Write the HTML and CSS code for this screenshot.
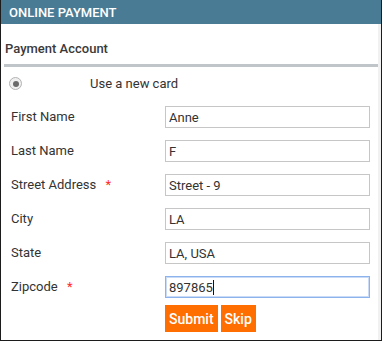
FILE: index.html
```html
<!DOCTYPE html>
<html lang="en">
<head>
    <meta charset="UTF-8">
    <title>Online Payment</title>
    <link rel="stylesheet" href="styles.css">
</head>
<body>
    <div class="panel">
        <div class="panel-header">ONLINE PAYMENT</div>
        <div class="panel-body">
            <div class="account-title">Payment Account</div>

            <div class="card-choice">
                <span class="radio"><span class="radio-dot"></span></span>
                <span class="card-label">Use a new card</span>
            </div>

            <div class="form">
                <div class="form-row">
                    <label>First Name</label>
                    <input class="field" type="text" value="Anne">
                </div>
                <div class="form-row">
                    <label>Last Name</label>
                    <input class="field" type="text" value="F">
                </div>
                <div class="form-row">
                    <label>Street Address <span class="required">*</span></label>
                    <input class="field" type="text" value="Street - 9">
                </div>
                <div class="form-row">
                    <label>City</label>
                    <input class="field" type="text" value="LA">
                </div>
                <div class="form-row">
                    <label>State</label>
                    <input class="field" type="text" value="LA, USA">
                </div>
                <div class="form-row">
                    <label>Zipcode <span class="required">*</span></label>
                    <div class="field-wrap">
                        <input class="field field-focus" type="text" value="897865">
                        <span class="caret"></span>
                    </div>
                </div>
                <div class="actions">
                    <button class="btn">Submit</button>
                    <button class="btn">Skip</button>
                </div>
            </div>
        </div>
    </div>
</body>
</html>
```

FILE: styles.css
```css
body {
    margin: 0;
    padding: 0;
    background: #ffffff;
    font-family: Roboto, "Liberation Sans", sans-serif;
    color: #333333;
}
.panel {
    width: 380px;
    height: 340px;
    border: 1px solid #1c1c1c;
    border-top: none;
    background: #ffffff;
}
.panel-header {
    height: 24px;
    line-height: 25px;
    padding-left: 8px;
    background: #4a7b95;
    color: #ffffff;
    font-size: 13px;
    font-weight: 500;
}
.panel-body {
    height: 316px;
    border-right: 3px solid #f1f1f1;
}
.account-title {
    margin-left: 3px;
    padding-left: 1px;
    padding-top: 10px;
    height: 30px;
    line-height: 30px;
    font-size: 13px;
    font-weight: 500;
    color: #3a3a3a;
    border-bottom: 3px solid #c0c5c9;
}
.card-choice {
    display: flex;
    align-items: center;
    height: 33px;
    padding-left: 8px;
}
.radio {
    display: flex;
    align-items: center;
    justify-content: center;
    width: 11px;
    height: 11px;
    border: 1px solid #b3b3b3;
    border-radius: 50%;
    background: #efefef;
}
.radio-dot {
    width: 6px;
    height: 6px;
    border-radius: 50%;
    background: #6a6a6a;
}
.card-label {
    margin-left: 68px;
    font-size: 13px;
    color: #333333;
}
.form-row {
    display: flex;
    align-items: center;
    height: 34px;
}
.form-row label {
    width: 154px;
    padding-left: 10px;
    margin-top: -1px;
    font-size: 13px;
    color: #333333;
}
.required {
    margin-left: 6px;
    color: #ff2b2b;
}
.field {
    box-sizing: border-box;
    width: 205px;
    height: 22px;
    margin: 0;
    padding: 0 3px;
    border: 1px solid #c6c6c6;
    border-radius: 0;
    font-family: Roboto, "Liberation Sans", sans-serif;
    font-size: 13px;
    color: #333333;
    outline: none;
}
.field-focus {
    border-color: #8db3ec;
    box-shadow: 0 0 0 1px #c9dbf6 inset;
}
.field-wrap {
    position: relative;
    display: flex;
}
.caret {
    position: absolute;
    left: 48px;
    top: 4px;
    width: 1px;
    height: 15px;
    background: #111111;
}
.actions {
    display: flex;
    gap: 3px;
    margin-top: 1px;
    padding-left: 164px;
}
.btn {
    height: 27px;
    padding: 0 4px;
    border: none;
    border-radius: 0;
    background: #ff6e00;
    color: #ffffff;
    font-family: Roboto, "Liberation Sans", sans-serif;
    font-size: 14px;
    font-weight: 500;
    cursor: pointer;
}
```
